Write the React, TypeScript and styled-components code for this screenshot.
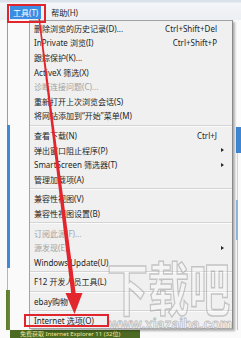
import React from "react";
import styled, { createGlobalStyle } from "styled-components";

const GlobalStyle = createGlobalStyle`
  html, body {
    margin: 0;
    padding: 0;
    background: #fff;
  }
  body {
    font-family: "Noto Sans", "Noto Sans CJK SC", sans-serif;
  }
`;

const Screen = styled.div`
  position: relative;
  width: 241px;
  height: 338px;
  overflow: hidden;
  display: flex;
  flex-direction: column;
  background: #fff;
`;

const TopBar = styled.div`
  height: 20px;
  flex-shrink: 0;
  display: flex;
  align-items: flex-start;
  gap: 7px;
  padding: 6px 0 0 10px;
  box-sizing: border-box;
  background: linear-gradient(#d9e1ea 0, #d9e1ea 2px, #f3f5f8 3px, #eceff3 100%);
`;

const MenuTitle = styled.div<{ $active?: boolean }>`
  height: 13px;
  line-height: 13px;
  padding: 0 3px;
  font-size: 8px;
  color: ${(p) => (p.$active ? "#fff" : "#1d1d1d")};
  background: ${(p) => (p.$active ? "#3b8de3" : "transparent")};
`;

const Middle = styled.div`
  height: 310px;
  flex-shrink: 0;
  display: flex;
`;

const Rail = styled.div<{ $w?: number }>`
  width: ${(p) => (p.$w ? `${p.$w}px` : "auto")};
  flex: ${(p) => (p.$w ? "none" : "1")};
  display: flex;
  flex-direction: column;
`;

const RailPiece = styled.div<{ $h?: number; $bg: string }>`
  height: ${(p) => (p.$h ? `${p.$h}px` : "auto")};
  flex: ${(p) => (p.$h ? "none" : "1")};
  background: ${(p) => p.$bg};
`;

const DropMenu = styled.div`
  width: 204px;
  align-self: flex-start;
  box-sizing: border-box;
  border: 1px solid #a3a3a3;
  border-right-color: #8a8a8a;
  background: #f0f0f0;
  box-shadow: 2px 2px 2px rgba(0, 0, 0, 0.3);
  position: relative;
  z-index: 1;
`;

const Item = styled.div<{ $disabled?: boolean }>`
  height: 14.6px;
  display: flex;
  align-items: center;
  padding: 0 8px 0 4px;
  font-size: 8px;
  white-space: nowrap;
  color: ${(p) => (p.$disabled ? "#a2a2a2" : "#1f1f1f")};
`;

const Shortcut = styled.span`
  margin-left: auto;
  margin-right: 7px;
`;

const SubArrow = styled.span`
  margin-left: auto;
  width: 0;
  height: 0;
  border-left: 3px solid #2a2a2a;
  border-top: 2.5px solid transparent;
  border-bottom: 2.5px solid transparent;
`;

const Separator = styled.div`
  height: 5px;
  display: flex;
  flex-direction: column;
  justify-content: center;

  &::before {
    content: "";
    height: 1px;
    background: #d4d4d4;
  }
  &::after {
    content: "";
    height: 1px;
    background: #fbfbfb;
  }
`;

const BottomBand = styled.div`
  flex: 1;
  display: flex;
  overflow: hidden;
`;

const BandPiece = styled.div<{ $w?: number; $bg: string }>`
  width: ${(p) => (p.$w ? `${p.$w}px` : "auto")};
  flex: ${(p) => (p.$w ? "none" : "1")};
  background: ${(p) => p.$bg};
  font-size: 6px;
  line-height: 8px;
  color: #efe7a0;
  padding-left: 10px;
  box-sizing: border-box;
  white-space: nowrap;
  overflow: hidden;
`;

const RedBox = styled.div<{ $x: number; $y: number; $w: number; $h: number }>`
  position: absolute;
  left: ${(p) => p.$x}px;
  top: ${(p) => p.$y}px;
  width: ${(p) => p.$w}px;
  height: ${(p) => p.$h}px;
  box-sizing: border-box;
  border: 2px solid #e0252d;
  z-index: 3;
`;

const Overlay = styled.svg`
  position: absolute;
  left: 0;
  top: 0;
  z-index: 4;
  pointer-events: none;
`;

const Watermark = styled.div`
  position: absolute;
  left: 107px;
  top: 258px;
  z-index: 2;
  display: flex;
  flex-direction: column;
  align-items: flex-start;
  pointer-events: none;
`;

const WatermarkBig = styled.div`
  font-family: "Noto Sans CJK SC", sans-serif;
  font-weight: 700;
  font-size: 41px;
  line-height: 41px;
  transform: scaleY(1.4);
  transform-origin: top left;
  color: rgba(255, 255, 255, 0.3);
  -webkit-text-stroke: 1.1px rgba(150, 150, 150, 0.5);
`;

const WatermarkUrl = styled.div`
  font-family: "Liberation Sans", sans-serif;
  font-weight: 700;
  font-size: 14px;
  line-height: 12px;
  margin-top: 19px;
  margin-left: 2px;
  color: rgba(255, 255, 255, 0.4);
  -webkit-text-stroke: 0.8px rgba(160, 160, 160, 0.65);
`;

type Entry =
  | { label: string; shortcut?: string; sub?: boolean; disabled?: boolean }
  | "sep";

const entries: Entry[] = [
  { label: "删除浏览的历史记录(D)...", shortcut: "Ctrl+Shift+Del" },
  { label: "InPrivate 浏览(I)", shortcut: "Ctrl+Shift+P" },
  { label: "跟踪保护(K)..." },
  { label: "ActiveX 筛选(X)" },
  { label: "诊断连接问题(C)...", disabled: true },
  { label: "重新打开上次浏览会话(S)" },
  { label: "将网站添加到“开始”菜单(M)" },
  "sep",
  { label: "查看下载(N)", shortcut: "Ctrl+J" },
  { label: "弹出窗口阻止程序(P)", sub: true },
  { label: "SmartScreen 筛选器(T)", sub: true },
  { label: "管理加载项(A)" },
  "sep",
  { label: "兼容性视图(V)" },
  { label: "兼容性视图设置(B)" },
  "sep",
  { label: "订阅此源(F)...", disabled: true },
  { label: "源发现(E)", sub: true, disabled: true },
  { label: "Windows Update(U)" },
  "sep",
  { label: "F12 开发人员工具(L)" },
  "sep",
  { label: "ebay购物" },
  "sep",
  { label: "Internet 选项(O)" },
];

const line = (x: number, c: string, w = 1) =>
  `linear-gradient(to right, #fafafa ${x}px, ${c} ${x}px, ${c} ${x + w}px, #fafafa ${x + w}px)`;

export default function App() {
  return (
    <>
      <GlobalStyle />
      <Screen>
        <TopBar>
          <MenuTitle $active>工具(T)</MenuTitle>
          <MenuTitle>帮助(H)</MenuTitle>
        </TopBar>

        <Middle>
          <Rail $w={29}>
            <RailPiece $h={105} $bg={line(7, "#9c9c9c")} />
            <RailPiece $h={143} $bg={line(7, "#3f8ad6", 3)} />
            <RailPiece $h={22} $bg={line(7, "#b5b5b5")} />
            <RailPiece
              $bg={"linear-gradient(to right, #fafafa 6px, #5b7a2c 6px, #6a8a38 10px, #fafafa 10px)"}
            />
          </Rail>

          <DropMenu>
            {entries.map((e, i) =>
              e === "sep" ? (
                <Separator key={i} />
              ) : (
                <Item key={i} $disabled={e.disabled}>
                  <span>{e.label}</span>
                  {e.shortcut && <Shortcut>{e.shortcut}</Shortcut>}
                  {e.sub && <SubArrow />}
                </Item>
              )
            )}
          </DropMenu>

          <Rail>
            <RailPiece $h={107} $bg="#fbfbfb" />
            <RailPiece $h={26} $bg={line(3, "#3d86d3", 5)} />
            <RailPiece $h={47} $bg={line(4, "#c9d6e4")} />
            <RailPiece $h={40} $bg={line(3, "#8fb6e0", 2)} />
            <RailPiece $bg={line(4, "#c4c4c4")} />
          </Rail>
        </Middle>

        <BottomBand>
          <BandPiece $w={7} $bg="#fafafa" />
          <BandPiece $w={130} $bg="#4c6a22">
            免费获取 Internet Explorer 11 (32位)
          </BandPiece>
          <BandPiece $bg="#fafafa" />
        </BottomBand>

        <RedBox $x={7} $y={4} $w={39} $h={19} />
        <RedBox $x={24} $y={314} $w={85} $h={13} />

        <Watermark>
          <WatermarkBig>下载吧</WatermarkBig>
          <WatermarkUrl>www.xiazaiba.com</WatermarkUrl>
        </Watermark>

        <Overlay width="241" height="338" viewBox="0 0 241 338">
          <polygon points="38.5,19 40,19 76,296 71.5,296" fill="#e3262e" />
          <polygon points="65.5,293 82.5,293 74.5,314" fill="#e3262e" />
        </Overlay>
      </Screen>
    </>
  );
}
